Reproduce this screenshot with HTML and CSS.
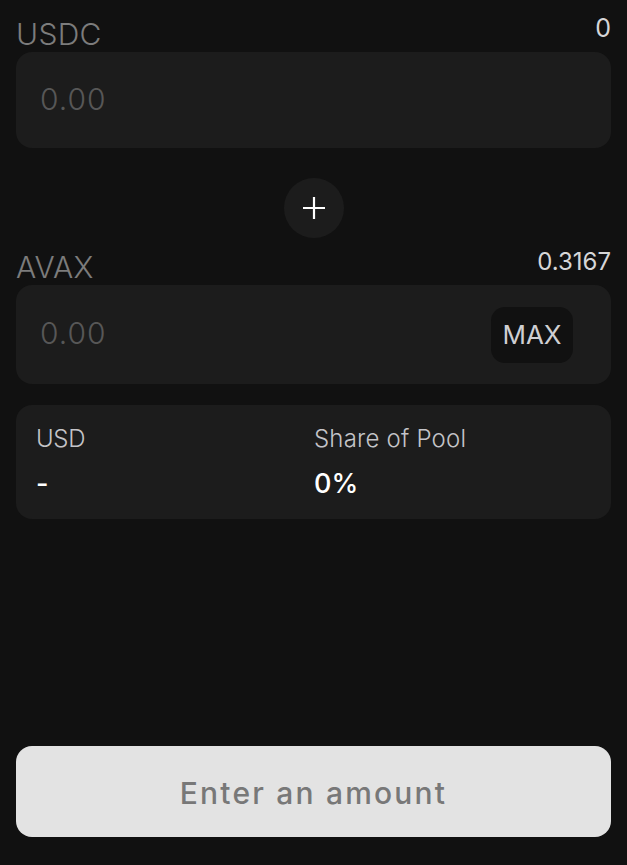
FILE: index.html
```html
<!DOCTYPE html>
<html lang="en">
<head>
<meta charset="utf-8">
<title>Add liquidity</title>
<link rel="stylesheet" href="styles.css">
</head>
<body>
<main class="page">
  <section class="token">
    <div class="token-head">
      <span class="token-name">USDC</span>
      <span class="token-balance">0</span>
    </div>
    <div class="amount-box">
      <span class="amount-placeholder">0.00</span>
    </div>
  </section>

  <div class="plus-row">
    <div class="plus-circle">
      <svg width="22" height="22" viewBox="0 0 22 22" aria-hidden="true">
        <path d="M11 0v22M0 11h22" stroke="#ffffff" stroke-width="2.2" fill="none"/>
      </svg>
    </div>
  </div>

  <section class="token token-second">
    <div class="token-head">
      <span class="token-name">AVAX</span>
      <span class="token-balance">0.3167</span>
    </div>
    <div class="amount-box amount-box-tall">
      <span class="amount-placeholder">0.00</span>
      <button class="max-btn">MAX</button>
    </div>
  </section>

  <section class="info-card">
    <div class="info-col">
      <span class="info-label">USD</span>
      <span class="info-value">-</span>
    </div>
    <div class="info-col">
      <span class="info-label info-label-wide">Share of Pool</span>
      <span class="info-value">0%</span>
    </div>
  </section>

  <button class="submit-btn"><span class="submit-text">Enter an amount</span></button>
</main>
</body>
</html>
```

FILE: styles.css
```css
* { box-sizing: border-box; }
html, body {
  margin: 0;
  padding: 0;
  background: #111111;
}
body {
  font-family: "Inter", "Noto Sans", sans-serif;
  color: #ffffff;
}
.page {
  min-height: 100vh;
  display: flex;
  flex-direction: column;
  padding: 0 16px 28px;
}
.token-head {
  display: flex;
  justify-content: space-between;
  align-items: flex-start;
  padding-top: 16px;
}
.token-second .token-head {
  padding-top: 11px;
}
.token-name {
  font-size: 30px;
  line-height: 36px;
  font-weight: 300;
  color: #7c7c7c;
  letter-spacing: 0.3px;
}
.token-balance {
  font-size: 25px;
  line-height: 25px;
  font-weight: 400;
  color: #d6d6d8;
}
.token-second .token-balance {
  font-size: 24px;
  margin-top: 0;
}
.amount-box {
  height: 96px;
  background: #1c1c1c;
  border-radius: 16px;
  display: flex;
  align-items: center;
  justify-content: space-between;
  padding: 0 38px 0 24px;
}
.amount-box-tall {
  height: 99px;
}
.amount-placeholder {
  font-size: 30px;
  font-weight: 300;
  color: #575757;
  letter-spacing: 1px;
  margin-top: -3px;
}
.max-btn {
  width: 82px;
  height: 56px;
  border: none;
  border-radius: 14px;
  background: #111111;
  color: #cfcfd2;
  font-family: "Inter", "Noto Sans", sans-serif;
  font-size: 26px;
  font-weight: 400;
  padding: 0;
}
.plus-row {
  display: flex;
  justify-content: center;
  margin-top: 30px;
}
.plus-circle {
  width: 60px;
  height: 60px;
  border-radius: 50%;
  background: #1c1c1c;
  display: flex;
  align-items: center;
  justify-content: center;
}
.info-card {
  margin-top: 21px;
  height: 114px;
  background: #1c1c1c;
  border-radius: 16px;
  display: grid;
  grid-template-columns: 278px 1fr;
  padding: 20px 20px 0;
}
.info-col {
  display: flex;
  flex-direction: column;
  align-items: flex-start;
}
.info-label {
  font-size: 24px;
  line-height: 28px;
  font-weight: 300;
  color: #c4c4c8;
  letter-spacing: -0.3px;
}
.info-label-wide {
  letter-spacing: 0.2px;
}
.info-value {
  margin-top: 16px;
  font-size: 27px;
  line-height: 30px;
  font-weight: 500;
  color: #ffffff;
}
.submit-btn {
  margin-top: auto;
  height: 91px;
  border: none;
  border-radius: 16px;
  background: #e3e3e3;
  color: #787878;
  font-family: "Inter", "Noto Sans", sans-serif;
  font-size: 30px;
  font-weight: 500;
  letter-spacing: 2.2px;
  padding: 3px 0 0;
}
```
